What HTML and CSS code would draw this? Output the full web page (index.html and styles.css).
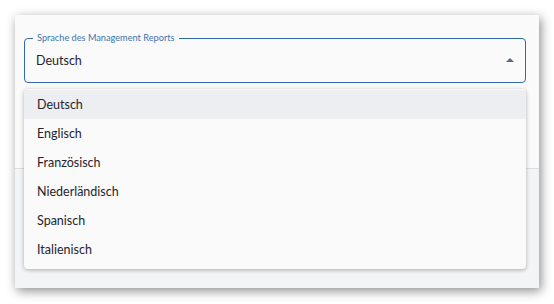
FILE: index.html
```html
<!DOCTYPE html>
<html lang="de">
<head>
<meta charset="UTF-8">
<title>Management Report</title>
<link rel="stylesheet" href="styles.css">
</head>
<body>
<div class="dialog">
  <div class="dialog-body">
    <div class="select-wrap">
      <fieldset class="select open">
        <legend>Sprache des Management Reports</legend>
        <span class="value">Deutsch</span>
        <svg class="caret" width="8" height="4" viewBox="0 0 8 4"><path d="M0 4 L4 0 L8 4 Z" fill="#5b6784"/></svg>
      </fieldset>
      <div class="behind"></div>
      <ul class="menu">
        <li class="active">Deutsch</li>
        <li>Englisch</li>
        <li>Französisch</li>
        <li>Niederländisch</li>
        <li>Spanisch</li>
        <li>Italienisch</li>
      </ul>
    </div>
  </div>
  <div class="dialog-footer"></div>
</div>
</body>
</html>
```

FILE: styles.css
```css
body { margin: 0; background: #fff; font-family: Lato, "Liberation Sans", sans-serif; color: #1f2430; }
.dialog { margin: 15px; width: 524px; height: 273px; background: #fafafa; box-shadow: 2px 3px 10px rgba(0,0,0,.45); display: flex; flex-direction: column; }
.dialog-body { height: 153px; padding: 17px 13px 0 9px; box-sizing: border-box; }
.dialog-footer { flex: 1; background: #f3f4f6; border-top: 1px solid #dcdde0; }
.select-wrap { position: relative; }
.select { margin: 0; height: 51px; box-sizing: border-box; border: 1px solid #2f6ba8; border-radius: 4px; padding: 0 11px 0 11px; display: flex; align-items: center; justify-content: space-between; }
.select legend { font-size: 9.2px; color: #3d74ad; padding: 0 4px; margin-left: -3px; line-height: 12px; }
.value { font-size: 12.5px; margin-top: -5px; }
.caret { margin-top: -6px; }
.behind { height: 30px; margin-top: 27px; border: 1px solid #c8cbd1; border-left: 0; border-radius: 0 3px 3px 0; }
.menu { position: absolute; top: 57px; left: 0; right: 0; margin: 0; padding: 1px 0 5px; list-style: none; background: #fafafa; border-radius: 4px; box-shadow: 0 1px 4px rgba(0,0,0,.3); }
.menu li { height: 29px; line-height: 29px; padding-left: 13px; font-size: 12.5px; }
.menu li.active { background: #eceef2; }
```
